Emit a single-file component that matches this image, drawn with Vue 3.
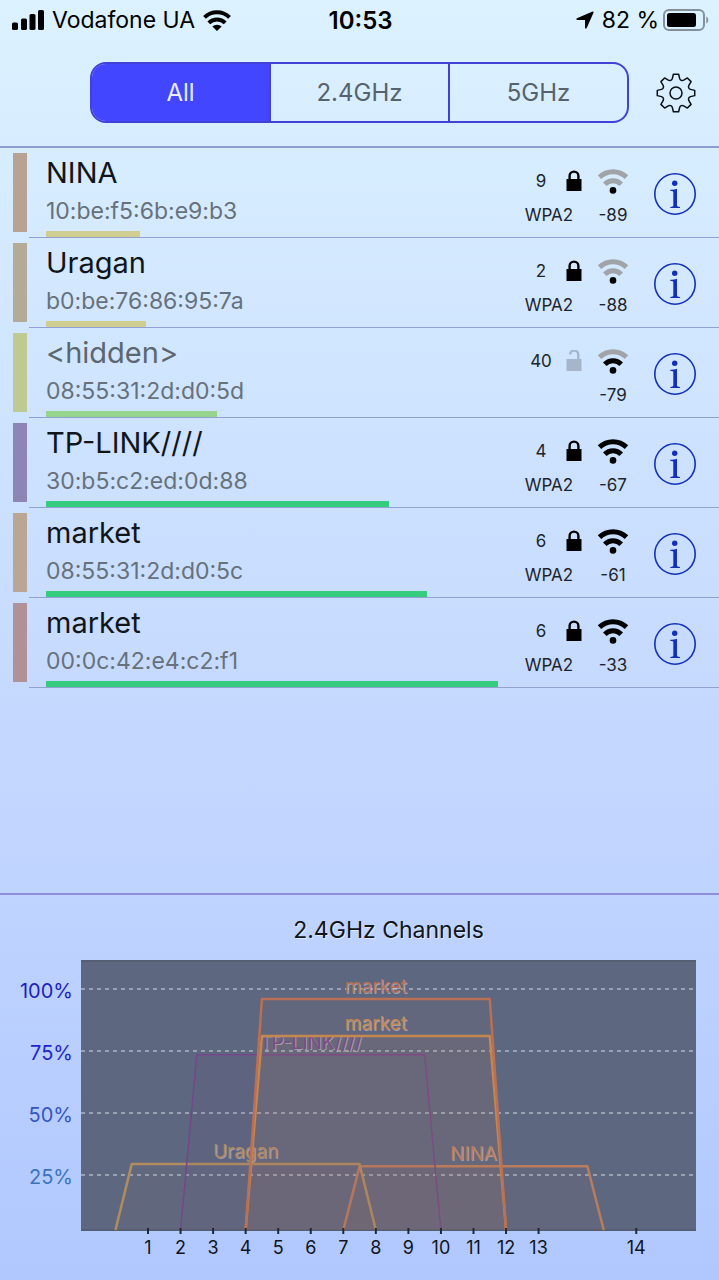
<template>
  <div class="wifi-page">
    <!-- Status bar -->
    <div class="status-bar">
      <div class="status-left">
        <svg class="cell-icon" viewBox="0 0 32 20" aria-hidden="true">
          <rect x="0" y="12.5" width="6" height="7.5" rx="1.6" />
          <rect x="9" y="8.5" width="6" height="11.5" rx="1.6" />
          <rect x="17.5" y="4" width="6" height="16" rx="1.6" />
          <rect x="26" y="0" width="6" height="20" rx="1.6" />
        </svg>
        <span>Vodafone UA</span>
        <svg class="status-wifi" viewBox="0 0 28 21" aria-hidden="true">
          <path d="M1.5 7.4a18 18 0 0 1 25 0" />
          <path d="M5.8 12.9a11.6 11.6 0 0 1 16.4 0" />
          <path class="wedge" d="M9.3 16.6a6.8 6.8 0 0 1 9.4 0L14 21z" />
        </svg>
      </div>
      <span class="status-time">10:53</span>
      <div class="status-right">
        <svg class="arrow-icon" viewBox="0 0 18 18" aria-hidden="true">
          <path d="M16.6.5a.8.8 0 0 1 1 1L10.7 17c-.4.9-1.7.7-1.7-.3V9H1.3C.2 9 0 7.7.9 7.3z" />
        </svg>
        <span class="battery-text">82 %</span>
        <svg class="battery-icon" viewBox="0 0 46 22" aria-hidden="true">
          <rect class="battery-shell" x="1" y="1" width="40" height="20" rx="5" />
          <rect x="4" y="4" width="29" height="14" rx="2.5" />
          <path class="battery-nub" d="M43.3 7.5c2.6 1 2.6 6 0 7z" />
        </svg>
      </div>
    </div>

    <!-- Band filter -->
    <header class="toolbar">
      <div class="segments" role="group" aria-label="Band">
        <button
          v-for="band in bands"
          :key="band"
          type="button"
          class="segment"
          :class="{ active: band === activeBand }"
          :aria-pressed="band === activeBand"
          @click="activeBand = band"
        >{{ band }}</button>
      </div>
      <button type="button" class="gear-btn" aria-label="Settings">
        <svg viewBox="-20 -20 40 40" aria-hidden="true">
          <path :d="gearPath" />
          <circle r="6" />
        </svg>
      </button>
    </header>

    <!-- Network list -->
    <ul class="network-list">
      <li v-for="net in visibleNetworks" :key="net.mac" class="network">
        <div class="color-mark" :style="{ background: net.mark }"></div>
        <div class="network-body">
          <div class="network-main">
            <div class="network-name" :class="{ hidden: net.hidden }">{{ net.name }}</div>
            <div class="network-mac">{{ net.mac }}</div>
            <div class="signal-bar" :style="{ width: net.bar + '%', background: net.barColor }"></div>
          </div>
          <div class="network-meta">
            <span>{{ net.channel }}</span>
            <svg class="lock-icon" :class="{ open: !net.security }" viewBox="0 0 16 22" aria-hidden="true">
              <rect x="0.5" y="9" width="15" height="12" />
              <path v-if="net.security" d="M3.6 10V6a4.4 4.4 0 0 1 8.8 0v4" />
              <path v-else d="M12.3 10V4.6a4.1 4.1 0 0 0-8.2 0" />
            </svg>
            <svg class="wifi-icon" viewBox="0 0 32 26" aria-hidden="true">
              <path :class="{ dim: net.rssi < -75 }" d="M2.5 9.1a19.5 19.5 0 0 1 27 0" />
              <path :class="{ dim: net.rssi < -85 }" d="M7.8 16.2a11.4 11.4 0 0 1 16.4 0" />
              <circle cx="16" cy="22.4" r="3.3" />
            </svg>
            <span class="security">{{ net.security }}</span>
            <span class="rssi">{{ net.rssi }}</span>
          </div>
          <button type="button" class="info-btn" :aria-label="'Details of ' + net.name">
            <svg viewBox="0 0 42 42" aria-hidden="true">
              <circle class="ring" cx="21" cy="21" r="20.2" />
              <circle cx="20.7" cy="10.2" r="2.7" />
              <path d="M16.3 16.8c2.5 0 4.500-.3 6.700-1v16.500c0 1.200.8 1.500 3 1.600v1h-9.700v-1c2.300-.1 3-.4 3-1.600V19.400c0-1.200-.7-1.500-3-1.500z" />
            </svg>
          </button>
        </div>
      </li>
    </ul>

    <!-- Channel chart -->
    <section class="channels">
      <h2 class="channels-title">2.4GHz Channels</h2>
      <svg class="chart" viewBox="0 0 719 330" role="img" aria-label="2.4GHz Channels">
        <rect class="plot" x="81" y="10" width="615" height="271" />
        <line class="plot-edge" x1="81" x2="696" y1="11" y2="11" />
        <line class="plot-edge" x1="81" x2="696" y1="280" y2="280" />
        <g v-for="tick in yTicks" :key="tick.value">
          <line class="grid-line" x1="81" x2="696" :y1="levelY(tick.value)" :y2="levelY(tick.value)" />
          <text class="y-label" x="73" :y="levelY(tick.value) + 9" :fill="tick.color">{{ tick.value }}%</text>
        </g>
        <g v-for="shape in shapes" :key="shape.mac">
          <text class="net-label glow" :x="shape.center + 1" :y="shape.labelY + 1" aria-hidden="true">{{ shape.name }}</text>
          <text class="net-label" :x="shape.center" :y="shape.labelY" :fill="shape.color">{{ shape.name }}</text>
          <path class="net-shape" :d="shape.path" :fill="shape.color" :stroke="shape.color" :stroke-width="shape.stroke" />
        </g>
        <g v-for="ch in 14" :key="ch">
          <line class="x-tick" :x1="channelX(ch)" :x2="channelX(ch)" y1="278" y2="284" />
          <text class="x-label" :x="channelX(ch)" y="304">{{ ch }}</text>
        </g>
      </svg>
    </section>
  </div>
</template>

<script setup>
import { ref, computed } from 'vue'

const bands = ['All', '2.4GHz', '5GHz']
const activeBand = ref('All')

const networks = [
  { name: 'NINA', mac: '10:be:f5:6b:e9:b3', channel: 9, security: 'WPA2', rssi: -89, bar: 20, barColor: '#cfcd90', mark: '#b8a294', level: 28.5, color: '#b97c5c' },
  { name: 'Uragan', mac: 'b0:be:76:86:95:7a', channel: 2, security: 'WPA2', rssi: -88, bar: 21.3, barColor: '#cfcd90', mark: '#b3aa98', level: 29.4, color: '#b08c5f' },
  { name: '<hidden>', mac: '08:55:31:2d:d0:5d', channel: 40, security: '', rssi: -79, bar: 36.3, barColor: '#96d48e', mark: '#bdca92', hidden: true },
  { name: 'TP-LINK////', mac: '30:b5:c2:ed:0d:88', channel: 4, security: 'WPA2', rssi: -67, bar: 73, barColor: '#36cc80', mark: '#8c85b6', level: 73.5, color: '#76468c' },
  { name: 'market', mac: '08:55:31:2d:d0:5c', channel: 6, security: 'WPA2', rssi: -61, bar: 81, barColor: '#36cc80', mark: '#baa695', level: 81, color: '#c68850' },
  { name: 'market', mac: '00:0c:42:e4:c2:f1', channel: 6, security: 'WPA2', rssi: -33, bar: 96.2, barColor: '#36cc80', mark: '#b09197', level: 96, color: '#ba7054' }
]

const yTicks = [
  { value: 100, color: '#1d1fbd' },
  { value: 75, color: '#2225cb' },
  { value: 50, color: '#3656c2' },
  { value: 25, color: '#3b74bd' }
]

const visibleNetworks = computed(() => {
  if (activeBand.value === '2.4GHz') return networks.filter(n => n.channel <= 14)
  if (activeBand.value === '5GHz') return networks.filter(n => n.channel > 14)
  return networks
})

// channel 14 sits apart from the other thirteen
const channelX = ch => 148 + 32.55 * ((ch === 14 ? 16 : ch) - 1)
const levelY = level => 287 - 2.48 * level

const shapes = networks
  .filter(n => n.level)
  .map(n => {
    const center = channelX(1) + 32.55 * (n.channel + 1)
    const top = levelY(n.level)
    const foot = 32.55 * 4
    const edge = 32.55 * 3.5
    return {
      ...n,
      center,
      labelY: top - 6,
      stroke: n.name === 'TP-LINK////' ? 1.5 : 2.5,
      path: `M${center - foot} 280L${center - edge} ${top}H${center + edge}L${center + foot} 280`
    }
  })

// eight teeth with rounded valleys between them
const polar = (r, deg) => {
  const a = (deg * Math.PI) / 180
  return `${(r * Math.cos(a)).toFixed(2)} ${(r * Math.sin(a)).toFixed(2)}`
}
const gearPath = Array.from({ length: 8 }, (_, i) => {
  const a = i * 45
  return `${i ? 'L' : 'M'}${polar(15, a - 14)}L${polar(18.9, a - 8)}L${polar(18.9, a + 8)}L${polar(15, a + 14)}Q${polar(12.6, a + 22.5)} ${polar(15, a + 31)}`
}).join('') + 'Z'
</script>

<style>
body {
  margin: 0;
}
</style>

<style scoped>
.wifi-page {
  min-height: 100vh;
  display: flex;
  flex-direction: column;
  font-family: Inter, 'Liberation Sans', sans-serif;
  color: #10151c;
  background: linear-gradient(#dcf2ff, #c5d9ff 55%, #b1c8ff);
}

button {
  font-family: inherit;
  border: none;
  background: none;
  padding: 0;
  cursor: pointer;
}

.status-bar {
  display: grid;
  grid-template-columns: 1fr auto 1fr;
  align-items: center;
  height: 40px;
  padding: 0 10px 0 12px;
  font-size: 23px;
  color: #000;
}

.status-left,
.status-right {
  display: flex;
  align-items: center;
  gap: 8px;
}

.status-right {
  justify-content: flex-end;
  gap: 4px;
}

.battery-text {
  padding-left: 4px;
}

.status-time {
  font-size: 24px;
  font-weight: 600;
}

.cell-icon {
  width: 32px;
  height: 20px;
}

.status-wifi {
  width: 28px;
  height: 21px;
}

.status-wifi path {
  fill: none;
  stroke: #000;
  stroke-width: 4;
}

.status-wifi .wedge {
  fill: #000;
  stroke: none;
}

.arrow-icon {
  width: 18px;
  height: 18px;
}

.battery-icon {
  width: 46px;
  height: 22px;
}

.battery-shell {
  fill: none;
  stroke: #83919a;
  stroke-width: 2;
}

.battery-nub {
  fill: #83919a;
}

.toolbar {
  display: flex;
  align-items: center;
  gap: 27px;
  padding: 22px 23px 23px 90px;
  border-bottom: 2px solid #8f9ccf;
}

.segments {
  flex: 1;
  display: flex;
  height: 61px;
  box-sizing: border-box;
  border: 2px solid #4340d8;
  border-radius: 16px;
  overflow: hidden;
}

.segment {
  flex: 1;
  font-size: 24px;
  color: #56626d;
}

.segment + .segment {
  border-left: 2px solid #4340d8;
}

.segment.active {
  background: #4346ff;
  color: #e8edff;
}

.gear-btn {
  width: 40px;
  height: 40px;
}

.gear-btn svg {
  display: block;
  fill: none;
  stroke: #0a0f14;
  stroke-width: 1.5;
  stroke-linejoin: round;
}

.network-list {
  flex: 1;
  margin: 0;
  padding: 0 0 0 13px;
  list-style: none;
}

.network {
  display: flex;
  gap: 2px;
  height: 90px;
}

.color-mark {
  width: 14px;
  margin: 5px 0 6px;
}

.network-body {
  flex: 1;
  display: flex;
  align-items: center;
  padding: 0 23px 0 17px;
  border-bottom: 1px solid #93a0d4;
}

.network-main {
  flex: 1;
  min-width: 0;
  padding-top: 6px;
}

.network-name {
  font-size: 29px;
  line-height: 36px;
}

.network-name.hidden {
  color: #5c6670;
}

.network-mac {
  font-size: 23px;
  line-height: 40px;
  color: #66717c;
}

.signal-bar {
  height: 6px;
}

.network-meta {
  display: grid;
  grid-template-columns: 50px 16px 15px 32px;
  grid-template-rows: 34px 34px;
  align-items: center;
  justify-items: center;
  padding-top: 10px;
  margin-right: 25px;
  font-size: 17px;
  color: #1c242e;
}

.wifi-icon,
.rssi {
  grid-column: 4;
}

.security {
  grid-column: 1 / 3;
}

.lock-icon {
  width: 16px;
  height: 22px;
}

.lock-icon path {
  fill: none;
  stroke: #000;
  stroke-width: 2.4;
}

.lock-icon.open {
  opacity: 0.2;
}

.wifi-icon {
  width: 32px;
  height: 26px;
}

.wifi-icon path {
  fill: none;
  stroke: #000;
  stroke-width: 5;
}

.wifi-icon .dim {
  stroke: #a0a3a8;
}

.info-btn {
  width: 42px;
  height: 42px;
  margin-top: 2px;
}

.info-btn svg {
  display: block;
  fill: #1230bc;
}

.info-btn .ring {
  fill: none;
  stroke: #1230bc;
  stroke-width: 1.6;
}

.channels {
  border-top: 2px solid #8e8fd6;
  padding-top: 15px;
}

.channels-title {
  margin: 0;
  padding: 0 23px 0 81px;
  text-align: center;
  font-size: 23px;
  font-weight: 400;
  line-height: 40px;
  text-shadow: 1px 1px 0 rgba(255, 255, 255, 0.5);
}

.chart {
  display: block;
  width: 100%;
}

.plot {
  fill: #5d6780;
}

.plot-edge {
  stroke: #555e72;
  stroke-width: 2;
}

.grid-line {
  stroke: #99a1b3;
  stroke-width: 2;
  stroke-dasharray: 4 4;
}

.y-label {
  font-size: 20px;
  text-anchor: end;
}

.x-label {
  font-size: 18px;
  text-anchor: middle;
  fill: #10151c;
}

.x-tick {
  stroke: #202838;
  stroke-width: 2;
}

.net-label {
  font-size: 19px;
  text-anchor: middle;
}

.net-label.glow {
  fill: #c8ccd8;
  opacity: 0.6;
}

.net-shape {
  fill-opacity: 0.06;
  stroke-linejoin: round;
}
</style>
